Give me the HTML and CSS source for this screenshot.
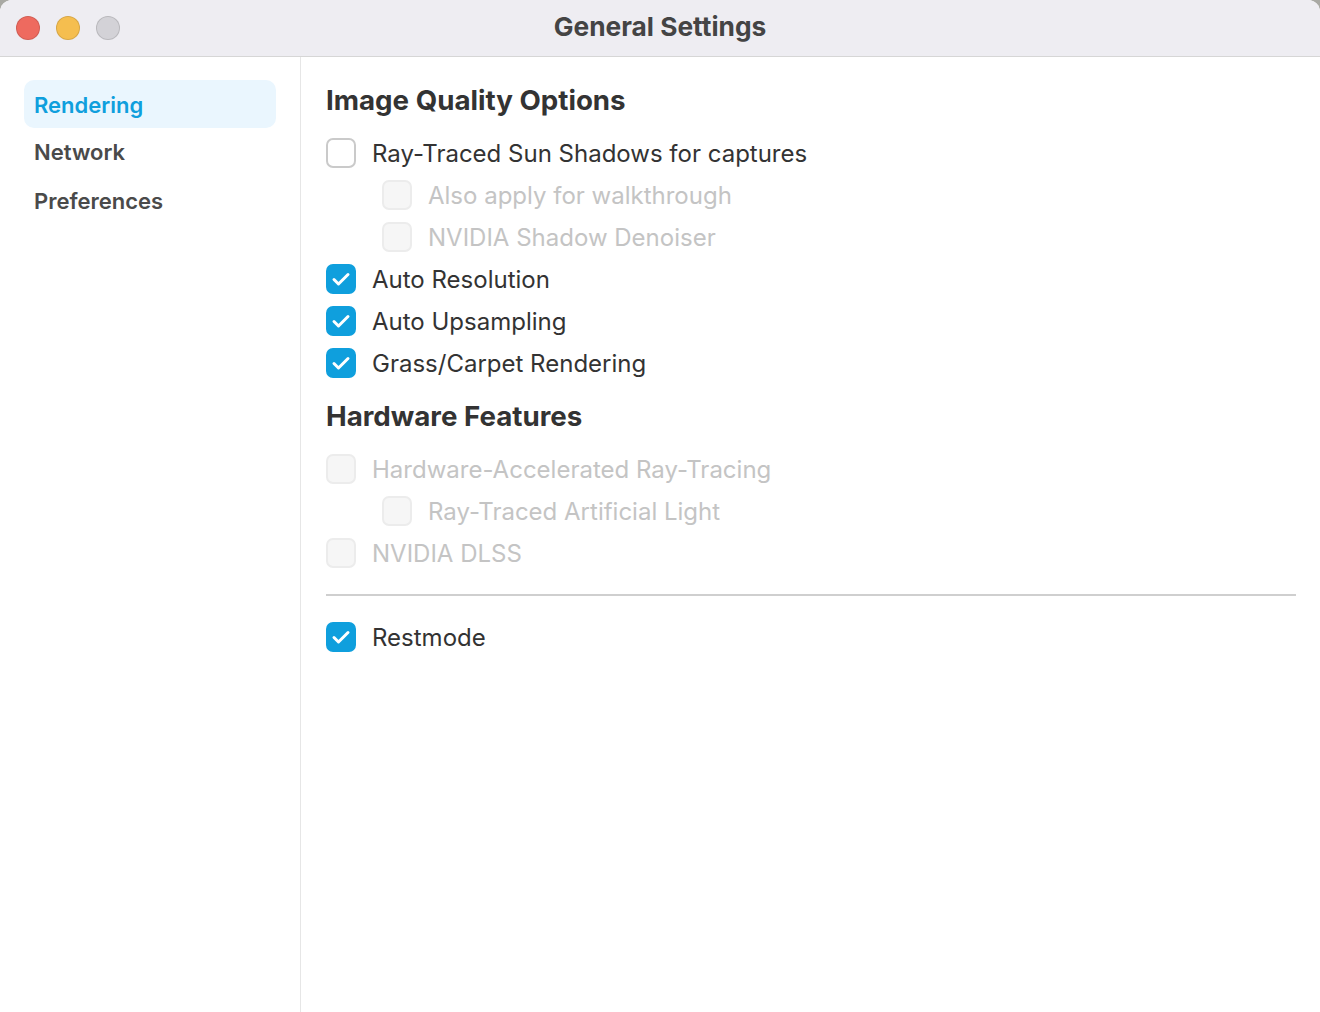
FILE: index.html
```html
<!DOCTYPE html>
<html lang="en">
    <head>
        <meta charset="UTF-8" />
        <title>General Settings</title>
        <link rel="stylesheet" href="styles.css">
    </head>
    <body>
        <div class="window">
            <header class="titlebar">
                <div class="lights">
                    <span class="light red"></span>
                    <span class="light yellow"></span>
                    <span class="light gray"></span>
                </div>
                <h1 class="title">General Settings</h1>
            </header>
            <div class="body">
                <aside class="sidebar">
                    <ul>
                        <li class="active">Rendering</li>
                        <li>Network</li>
                        <li>Preferences</li>
                    </ul>
                </aside>
                <main class="content">
                    <h2>Image Quality Options</h2>
                    <div class="option"><span class="box"></span>Ray-Traced Sun Shadows for captures</div>
                    <div class="option sub disabled"><span class="box"></span>Also apply for walkthrough</div>
                    <div class="option sub disabled"><span class="box"></span>NVIDIA Shadow Denoiser</div>
                    <div class="option checked"><span class="box"><svg viewBox="2 2 26 26"><path d="M8 15.5l4.5 4.5 9.5-9.5" /></svg></span>Auto Resolution</div>
                    <div class="option checked"><span class="box"><svg viewBox="2 2 26 26"><path d="M8 15.5l4.5 4.5 9.5-9.5" /></svg></span>Auto Upsampling</div>
                    <div class="option checked"><span class="box"><svg viewBox="2 2 26 26"><path d="M8 15.5l4.5 4.5 9.5-9.5" /></svg></span>Grass/Carpet Rendering</div>

                    <h2>Hardware Features</h2>
                    <div class="option disabled"><span class="box"></span>Hardware-Accelerated Ray-Tracing</div>
                    <div class="option sub disabled"><span class="box"></span>Ray-Traced Artificial Light</div>
                    <div class="option disabled"><span class="box"></span>NVIDIA DLSS</div>

                    <hr class="divider" />
                    <div class="option checked"><span class="box"><svg viewBox="2 2 26 26"><path d="M8 15.5l4.5 4.5 9.5-9.5" /></svg></span>Restmode</div>
                </main>
            </div>
        </div>
    </body>
</html>
```
FILE: styles.css
```css
body {
    margin: 0;
    background-color: #a9a9a4;
    font-family: Inter, "Noto Sans", sans-serif;
}

.window {
    width: 1320px;
    height: 1012px;
    background-color: #ffffff;
    border-radius: 12px 12px 0 0;
    overflow: hidden;
    display: flex;
    flex-direction: column;
}

.titlebar {
    height: 56px;
    background-color: #eeedf2;
    border-bottom: 1px solid #d6d6d6;
    display: flex;
    align-items: center;
    justify-content: center;
    position: relative;
    flex-shrink: 0;
}

.lights {
    position: absolute;
    left: 16px;
    top: 16px;
    display: flex;
    gap: 16px;
}

.light {
    width: 22px;
    height: 22px;
    border-radius: 50%;
    border: 1px solid rgba(0, 0, 0, 0.12);
}

.light.red {
    background-color: #ee6a5f;
}

.light.yellow {
    background-color: #f5be4f;
}

.light.gray {
    background-color: #d3d2d7;
}

.title {
    margin: 0 0 3px 0;
    font-size: 26.3px;
    font-weight: 700;
    color: #444444;
}

.body {
    flex-grow: 1;
    display: flex;
}

.sidebar {
    width: 301px;
    border-right: 1px solid #e6e6e6;
    padding: 23px 24px 0 24px;
    box-sizing: border-box;
    flex-shrink: 0;
}

.sidebar ul {
    list-style: none;
    margin: 0;
    padding: 0;
}

.sidebar li {
    height: 48px;
    line-height: 51px;
    padding-left: 10px;
    font-size: 22px;
    font-weight: 600;
    color: #4a4a4a;
    border-radius: 10px;
}

.sidebar li + li {
    line-height: 49px;
}

.sidebar li:last-child {
    line-height: 51px;
}

.sidebar li.active {
    background-color: #eaf6fe;
    color: #0f9fdd;
}

.content {
    flex-grow: 1;
    padding: 23px 24px 0 25px;
    color: #333333;
}

.content h2 {
    margin: 0;
    font-size: 27.7px;
    font-weight: 700;
    line-height: 40px;
    color: #333333;
}

.option {
    display: flex;
    align-items: center;
    height: 42px;
    font-size: 24px;
    color: #333333;
}

.option .box {
    width: 30px;
    height: 30px;
    box-sizing: border-box;
    border: 2px solid #cacaca;
    border-radius: 7px;
    margin-right: 16px;
    flex-shrink: 0;
    display: flex;
}

.option.sub {
    padding-left: 56px;
}

.option.disabled {
    color: #c4c4c4;
}

.option.disabled .box {
    background-color: #f6f6f6;
    border-color: #ececec;
}

.option.checked .box {
    background-color: #0f9fdd;
    border-color: #0f9fdd;
}

.option .box svg {
    width: 26px;
    height: 26px;
    fill: none;
    stroke: #ffffff;
    stroke-width: 3;
    stroke-linecap: round;
    stroke-linejoin: round;
}

.content h2 + .option {
    margin-top: 12px;
}

.option + h2 {
    margin-top: 12px;
}

.divider {
    border: 0;
    border-top: 2px solid #cfcfcf;
    margin: 20px 0 20px 0;
}
```
